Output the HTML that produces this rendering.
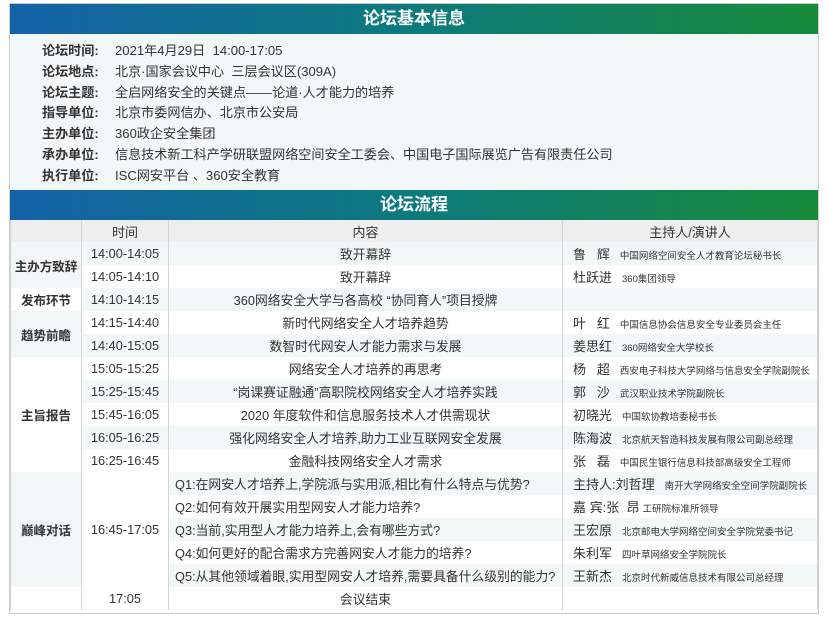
<!DOCTYPE html>
<html><head><meta charset="utf-8"><style>
*{margin:0;padding:0;box-sizing:border-box}
body{width:828px;height:618px;background:#fff;font-family:"Liberation Sans","Noto Sans CJK SC",sans-serif;color:#333;position:relative;overflow:hidden}
.box{position:absolute;left:9px;top:3px;width:810px;height:611px;border:1px solid #ccc}
.hd{height:30px;background:linear-gradient(90deg,#1462a8,#0c7a7c 50%,#178a3a);color:#fff;font-weight:bold;font-size:17px;text-align:center;line-height:30px}
.info{background:#f2f8f8;height:156px;padding-top:7px}
.info div{height:20.8px;line-height:20.8px;font-size:13.1px;padding-left:32px;white-space:nowrap}
.info b{display:inline-block;width:73px;white-space:nowrap}
table{border-collapse:collapse;width:808px;font-size:12.8px;table-layout:fixed}
td{height:23px;padding:0;text-align:center;border-left:1px solid #d4d4d4;border-right:1px solid #d4d4d4;white-space:nowrap;overflow:hidden;background:#fff}
tr.l td{background:#f2f8f8}
th{height:22px;background:#eeeeee;font-weight:normal;font-size:13px;border-left:1px solid #d4d4d4;border-right:1px solid #d4d4d4}
td.c1{font-weight:bold;background:#f2f8f8;font-size:12.5px}
td.w{background:#fff!important}
td.p{text-align:left;padding-left:10px;font-size:13px}
td.q{text-align:left;padding-left:6px}
.s{font-size:9.5px;margin-left:10px}
</style></head><body>
<div class="box">
<div class="hd">论坛基本信息</div>
<div class="info">
<div><b>论坛时间:</b>2021年4月29日&nbsp; 14:00-17:05</div>
<div><b>论坛地点:</b>北京·国家会议中心&nbsp; 三层会议区(309A)</div>
<div><b>论坛主题:</b>全启网络安全的关键点——论道·人才能力的培养</div>
<div><b>指导单位:</b>北京市委网信办、北京市公安局</div>
<div><b>主办单位:</b>360政企安全集团</div>
<div><b>承办单位:</b>信息技术新工科产学研联盟网络空间安全工委会、中国电子国际展览广告有限责任公司</div>
<div><b>执行单位:</b>ISC网安平台 、360安全教育</div>
</div>
<div class="hd">论坛流程</div>
<table>
<colgroup><col style="width:71px"><col style="width:87px"><col style="width:394px"><col></colgroup>
<tr><th></th><th>时间</th><th>内容</th><th>主持人/演讲人</th></tr>
<tr class="l"><td class="c1" rowspan="2">主办方致辞</td><td>14:00-14:05</td><td>致开幕辞</td><td class="p">鲁&nbsp;&nbsp; 辉<span class="s">中国网络空间安全人才教育论坛秘书长</span></td></tr>
<tr><td>14:05-14:10</td><td>致开幕辞</td><td class="p">杜跃进<span class="s">360集团领导</span></td></tr>
<tr class="l"><td class="c1 w">发布环节</td><td>14:10-14:15</td><td>360网络安全大学与各高校 “协同育人”项目授牌</td><td></td></tr>
<tr><td class="c1" rowspan="2">趋势前瞻</td><td>14:15-14:40</td><td>新时代网络安全人才培养趋势</td><td class="p">叶&nbsp;&nbsp; 红<span class="s">中国信息协会信息安全专业委员会主任</span></td></tr>
<tr class="l"><td>14:40-15:05</td><td>数智时代网安人才能力需求与发展</td><td class="p">姜思红<span class="s">360网络安全大学校长</span></td></tr>
<tr><td class="c1 w" rowspan="5">主旨报告</td><td>15:05-15:25</td><td>网络安全人才培养的再思考</td><td class="p">杨&nbsp;&nbsp; 超<span class="s">西安电子科技大学网络与信息安全学院副院长</span></td></tr>
<tr class="l"><td>15:25-15:45</td><td>“岗课赛证融通”高职院校网络安全人才培养实践</td><td class="p">郭&nbsp;&nbsp; 沙<span class="s">武汉职业技术学院副院长</span></td></tr>
<tr><td>15:45-16:05</td><td>2020 年度软件和信息服务技术人才供需现状</td><td class="p">初晓光<span class="s">中国软协教培委秘书长</span></td></tr>
<tr class="l"><td>16:05-16:25</td><td>强化网络安全人才培养,助力工业互联网安全发展</td><td class="p">陈海波<span class="s">北京航天智造科技发展有限公司副总经理</span></td></tr>
<tr><td>16:25-16:45</td><td>金融科技网络安全人才需求</td><td class="p">张&nbsp;&nbsp; 磊<span class="s">中国民生银行信息科技部高级安全工程师</span></td></tr>
<tr class="l"><td class="c1" rowspan="5">巅峰对话</td><td rowspan="5" class="w">16:45-17:05</td><td class="q">Q1:在网安人才培养上,学院派与实用派,相比有什么特点与优势?</td><td class="p">主持人:刘哲理<span class="s">南开大学网络安全空间学院副院长</span></td></tr>
<tr><td class="q">Q2:如何有效开展实用型网安人才能力培养?</td><td class="p">嘉 宾:张&nbsp; 昂<span class="s" style="margin-left:3px">工研院标准所领导</span></td></tr>
<tr class="l"><td class="q">Q3:当前,实用型人才能力培养上,会有哪些方式?</td><td class="p">王宏原<span class="s">北京邮电大学网络空间安全学院党委书记</span></td></tr>
<tr><td class="q">Q4:如何更好的配合需求方完善网安人才能力的培养?</td><td class="p">朱利军<span class="s">四叶草网络安全学院院长</span></td></tr>
<tr class="l"><td class="q">Q5:从其他领域着眼,实用型网安人才培养,需要具备什么级别的能力?</td><td class="p">王新杰<span class="s">北京时代新威信息技术有限公司总经理</span></td></tr>
<tr><td></td><td>17:05</td><td>会议结束</td><td></td></tr>
</table>
</div>
</body></html>
